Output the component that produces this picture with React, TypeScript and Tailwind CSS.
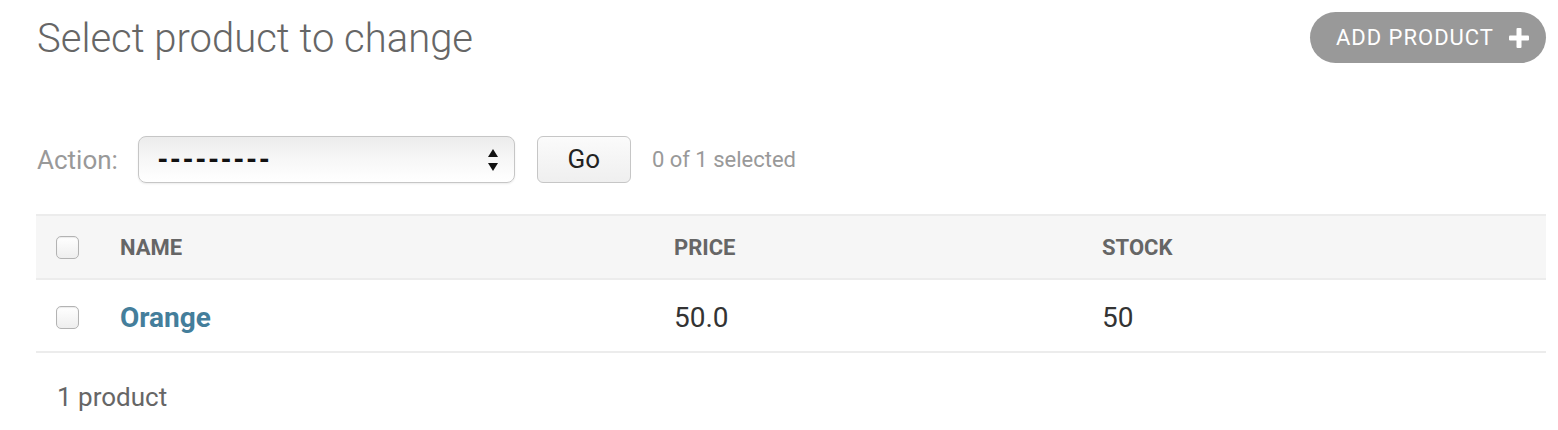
import React from 'react';

const Checkbox: React.FC = () => (
  <span className="block w-[23px] h-[23px] rounded-[5px] border border-[#b3b3b3] bg-gradient-to-b from-white to-[#eeeeee] shadow-[inset_0_1px_1px_rgba(0,0,0,0.08)]" />
);

const PlusIcon: React.FC = () => (
  <svg width="20" height="20" viewBox="0 0 20 20" className="block">
    <rect x="7.5" y="0" width="5" height="20" rx="1" fill="#fff" />
    <rect x="0" y="7.5" width="20" height="5" rx="1" fill="#fff" />
  </svg>
);

const SelectArrows: React.FC = () => (
  <svg width="12" height="26" viewBox="0 0 12 26" className="block">
    <path d="M6 2 L11 10 L1 10 Z" fill="#111" />
    <path d="M1 16 L11 16 L6 24 Z" fill="#111" />
  </svg>
);

const App: React.FC = () => {
  return (
    <div className="w-[1558px] h-[430px] bg-white pl-[36px] pr-[12px] font-['Roboto',sans-serif] overflow-hidden">
      <div className="flex items-start justify-between">
        <h1 className="mt-[15px] ml-px text-[40px] leading-[48px] font-light text-[#666]">
          Select product to change
        </h1>
        <a className="mt-[12px] flex items-center h-[51px] pl-[26px] pr-[17px] rounded-full bg-[#999] text-white text-[22px] tracking-[1px] uppercase">
          Add product
          <span className="ml-[15px]"><PlusIcon /></span>
        </a>
      </div>

      <div className="mt-[73px] flex items-center h-[47px]">
        <span className="text-[26px] leading-[30px] text-[#999] ml-px">Action:</span>
        <div className="ml-[20px] w-[377px] h-[47px] flex items-center justify-between pl-[18px] pr-[15px] rounded-[8px] border border-[#c6c6c6] bg-gradient-to-b from-[#ececec] via-[#f7f7f7] to-white shadow-[0_1px_2px_rgba(0,0,0,0.08)]">
          <span className="text-[26px] font-black text-[#111] tracking-[1px]">---------</span>
          <SelectArrows />
        </div>
        <button className="ml-[22px] w-[94px] h-[47px] rounded-[6px] border border-[#c6c6c6] bg-gradient-to-b from-[#fbfbfb] to-[#efefef] text-[26px] text-[#222]">
          Go
        </button>
        <span className="ml-[21px] text-[22px] text-[#999]">0 of 1 selected</span>
      </div>

      <div className="mt-[31px]">
        <div className="grid grid-cols-[84px_554px_428px_1fr] items-center h-[66px] bg-[#f6f6f6] border-t-2 border-b-2 border-[#ececec] text-[22px] font-bold text-[#666] uppercase">
          <div className="pl-[20px]"><Checkbox /></div>
          <div>Name</div>
          <div>Price</div>
          <div>Stock</div>
        </div>
        <div className="grid grid-cols-[84px_554px_428px_1fr] items-center h-[73px] pt-[4px] border-b-2 border-[#ececec] text-[28px] leading-[32px] text-[#333]">
          <div className="pl-[20px]"><Checkbox /></div>
          <div><a className="font-bold text-[#447e9b]">Orange</a></div>
          <div>50.0</div>
          <div>50</div>
        </div>
      </div>

      <div className="mt-[29px] pl-[21px] text-[26px] leading-[30px] text-[#666]">1 product</div>
    </div>
  );
};

export default App;
